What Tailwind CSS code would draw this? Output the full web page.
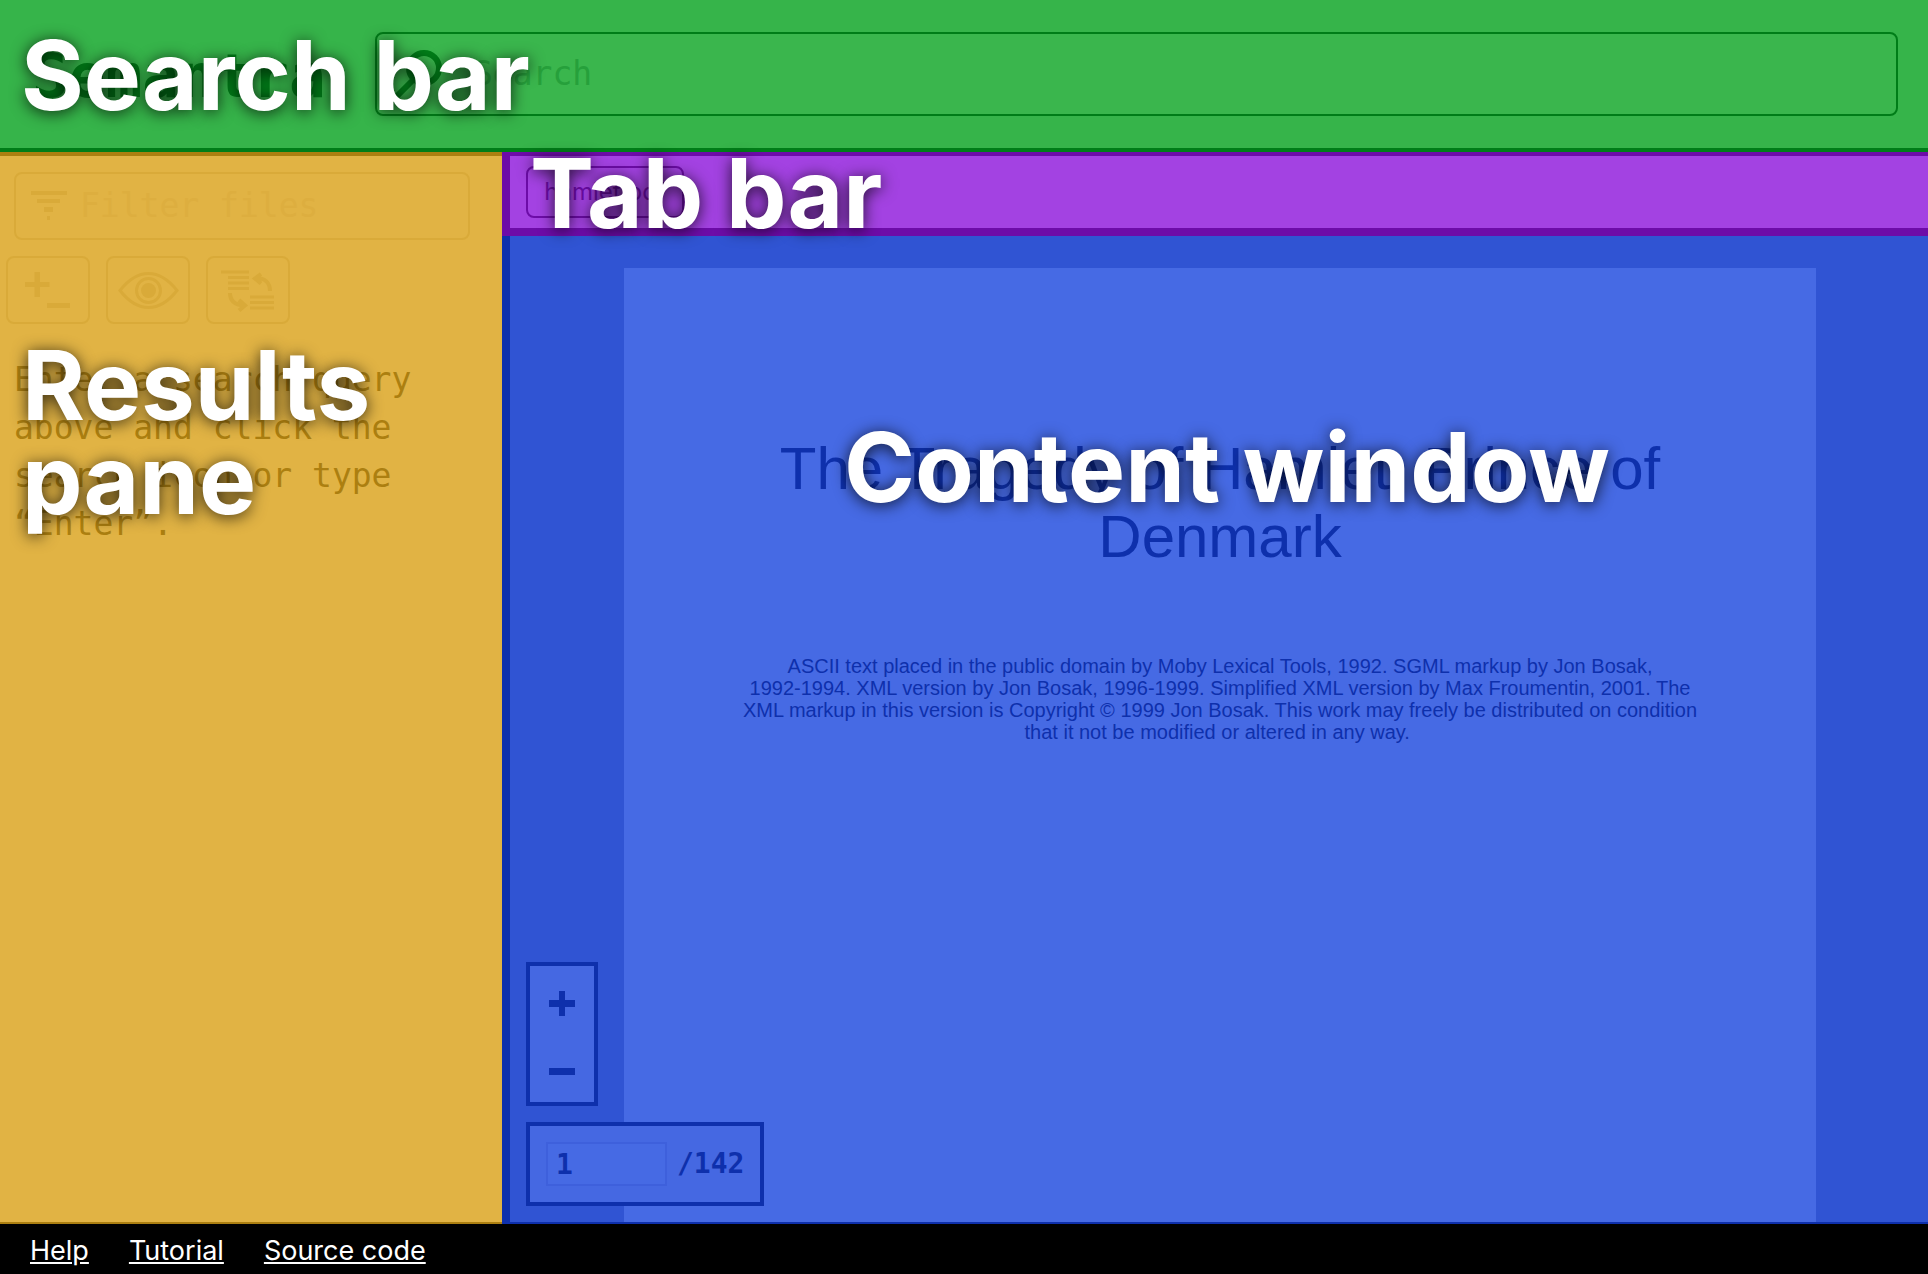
<!DOCTYPE html>
<html lang="en">
<head>
<meta charset="utf-8">
<title>Semantra</title>
<script src="https://cdn.jsdelivr.net/npm/@tailwindcss/browser@4"></script>
</head>
<body class="flex min-h-screen flex-col bg-black font-['Inter',sans-serif]">

<header class="relative flex items-center border-b-4 border-[#007d18] bg-[#36b44a] py-8 pr-[30px] pl-8">
  <div class="w-[343px] shrink-0 pt-1 font-['DejaVu_Sans_Mono',monospace] text-[61px] leading-[64px] font-bold text-[#007d18]">Semantra</div>
  <label class="flex h-[84px] flex-1 items-center gap-7 rounded-lg border-2 border-[#007d18] bg-[#3ab64d] pl-[14px]">
    <svg class="h-12 w-[54px] shrink-0" viewBox="0 0 54 48" fill="none" stroke="#007d18" stroke-width="6" aria-hidden="true"><circle cx="33" cy="18" r="15"/><path d="M23 29 6 46"/></svg>
    <input type="text" placeholder="Search" aria-label="Search" class="w-full bg-transparent font-['DejaVu_Sans_Mono',monospace] text-[33px] leading-12 text-[#007d18] outline-none placeholder:text-[#26a03b]">
  </label>
  <div class="pointer-events-none absolute top-7 left-[21px] z-10 text-[96px] leading-[94px] font-bold whitespace-nowrap text-white [text-shadow:0_2px_16px_#000000cc]">Search bar</div>
</header>

<main class="flex flex-1">
  <aside class="relative w-[502px] shrink-0 border-t-4 border-b-2 border-[#ac7f10] bg-[#e1b344]">
    <label class="mt-4 mr-8 ml-3.5 flex h-[68px] items-center gap-3 rounded-lg border-2 border-[#d9aa39] pl-3.5">
      <svg class="h-8 w-[38px] shrink-0" viewBox="0 0 38 32" fill="#d9aa39" aria-hidden="true"><path d="M1 1h36v4H1zM7 9h23v4H7zM14 17h9v5h-9zM17 26h3v4h-3z"/></svg>
      <input type="text" placeholder="Filter files" aria-label="Filter files" class="w-full bg-transparent font-['DejaVu_Sans_Mono',monospace] text-[33px] leading-12 text-[#ac7f10] outline-none placeholder:text-[#ddae3f]">
    </label>
    <div class="mt-4 ml-1.5 flex gap-4">
      <button type="button" aria-label="Expand or collapse" class="h-[68px] w-[84px] rounded-lg border-2 border-[#d9aa39]">
        <svg viewBox="0 0 80 64" fill="#d9aa39"><path d="M17 24h9.500v-10h5.500v10h9.500v5h-9.500v10h-5.500v-10h-9.500zM39 45h23v5h-23z"/></svg>
      </button>
      <button type="button" aria-label="Preview" class="h-[68px] w-[84px] rounded-lg border-2 border-[#d9aa39]">
        <svg viewBox="0 0 80 64" fill="none" stroke="#d9aa39" stroke-width="3"><path d="M12 32.500C21 21 30 15.500 40.500 15.500S60 21 69 32.500C60 44 51 49.500 40.500 49.500S21 44 12 32.500z"/><circle cx="40.500" cy="32.500" r="12"/><circle cx="40.500" cy="32.500" r="7.500" fill="#d9aa39" stroke="none"/></svg>
      </button>
      <button type="button" aria-label="Swap order" class="h-[68px] w-[84px] rounded-lg border-2 border-[#d9aa39]">
        <svg viewBox="0 0 80 64" fill="none" stroke="#d9aa39" stroke-width="3"><path d="M13 14h28M20 19.500h21M20 25h21M20 30.500h21M42 39h24M42 44.500h24M42 50h24"/><path stroke-width="4" d="M62 33C62 25 57 20 48 20M53 16l-6 4.500 6 5M22 35c0 8 5 12 14 12.500M31 42l6 5.500-6 5"/></svg>
      </button>
    </div>
    <p class="mt-8 px-3.5 font-['DejaVu_Sans_Mono',monospace] text-[33px] leading-12 text-[#ac7f10]">Enter a search query above and click the search icon or type “Enter”.</p>
    <div class="pointer-events-none absolute top-[182px] left-[22px] z-10 w-[400px] text-[96px] leading-[94px] font-bold text-white [text-shadow:0_2px_16px_#000000cc]">Results pane</div>
  </aside>

  <section class="flex min-w-0 flex-1 flex-col">
    <nav class="relative flex h-[84px] items-center border-t-4 border-b-8 border-l-8 border-[#6d0ca8] bg-[#a342e2] pl-4">
      <button type="button" class="h-[52px] w-[158px] rounded-lg border-2 border-[#6d0ca8] text-2xl text-[#6d0ca8]">hamlet.pdf</button>
      <div class="pointer-events-none absolute -top-[10px] left-5 z-10 text-[96px] leading-[94px] font-bold whitespace-nowrap text-white [text-shadow:0_2px_16px_#000000cc]">Tab bar</div>
    </nav>
    <div class="relative flex flex-1 border-b-2 border-l-8 border-[#0e30ac] bg-[#3054d3] pt-8">
      <article class="mr-28 ml-[114px] flex-1 bg-[#466ae4] px-28 pt-[167px] text-center font-['Liberation_Sans',sans-serif] text-[#0e30ac]">
        <h1 class="text-[60px] leading-[68px]">The Tragedy of Hamlet, Prince of Denmark</h1>
        <p class="mt-[84px] text-[20px] leading-[22px]">ASCII text placed in the public domain by Moby Lexical Tools, 1992. SGML markup by Jon Bosak,<br>1992-1994. XML version by Jon Bosak, 1996-1999. Simplified XML version by Max Froumentin, 2001. The<br>XML markup in this version is Copyright © 1999 Jon Bosak. This work may freely be distributed on condition<br>that it not be modified or altered in any way.&nbsp;</p>
      </article>
      <div class="absolute bottom-4 left-4 flex flex-col items-start gap-4">
        <div class="flex h-36 w-[72px] flex-col border-4 border-[#0e30ac] bg-[#4568e2]">
          <button type="button" aria-label="Zoom in" class="flex-1"><svg class="h-full w-full" viewBox="0 0 64 68" fill="#0e30ac"><path d="M19 34h10v-9h6v9h10v7h-10v9h-6v-9h-10z"/></svg></button>
          <button type="button" aria-label="Zoom out" class="flex-1"><svg class="h-full w-full" viewBox="0 0 64 68" fill="#0e30ac"><path d="M19 34h26v7h-26z"/></svg></button>
        </div>
        <label class="flex h-[84px] w-[238px] items-center gap-2.5 border-4 border-[#0e30ac] bg-[#4568e2] pl-4 font-['DejaVu_Sans_Mono',monospace] text-[28px] font-bold text-[#0e30ac]">
          <input type="text" value="1" aria-label="Page number" class="h-11 w-[121px] border-2 border-[#3e60dc] bg-[#466ae4] px-2 outline-none">
          <span>/142</span>
        </label>
      </div>
      <div class="pointer-events-none absolute top-[184px] right-0 left-4 z-10 text-center text-[96px] leading-[94px] font-bold whitespace-nowrap text-white [text-shadow:0_2px_16px_#000000cc]">Content window</div>
    </div>
  </section>
</main>

<footer class="flex h-[50px] items-center gap-10 bg-black px-[30px] pt-1 text-[27px] text-white">
  <a href="#" class="underline">Help</a>
  <a href="#" class="underline">Tutorial</a>
  <a href="#" class="underline">Source code</a>
</footer>
</body>
</html>
